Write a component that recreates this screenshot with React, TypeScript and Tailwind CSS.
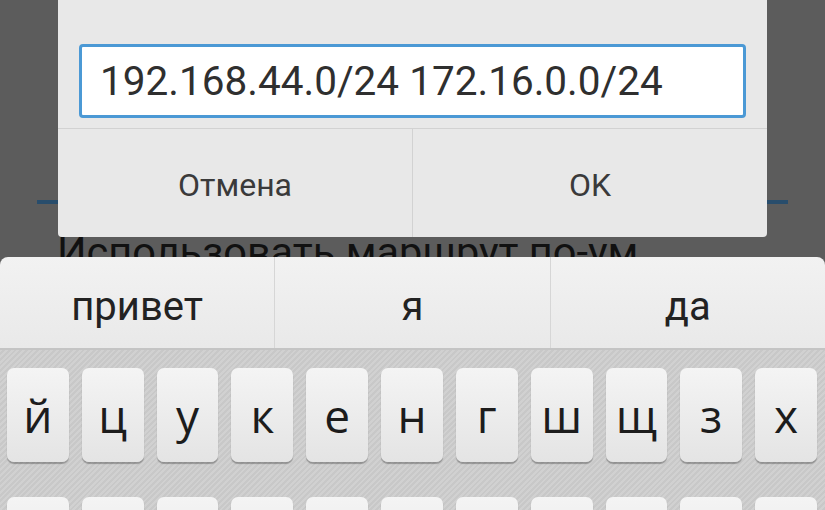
import React from "react";

const row1 = ["й", "ц", "у", "к", "е", "н", "г", "ш", "щ", "з", "х"];
const row2 = ["ф", "ы", "в", "а", "п", "р", "о", "л", "д", "ж", "э"];

function Key({ ch }: { ch: string }) {
  return (
    <div className="flex-1 h-[94px] shrink-0 rounded-[7px] bg-gradient-to-b from-[#f4f4f4] to-[#e4e4e4] shadow-[0_2px_1px_rgba(0,0,0,0.28)] flex items-center justify-center">
      <span className="text-[46px] leading-none text-[#1c1c1c]" style={{ fontFamily: '"Open Sans", sans-serif' }}>
        {ch}
      </span>
    </div>
  );
}

export default function App() {
  return (
    <div className="relative w-[825px] h-[510px] overflow-hidden bg-[#5c5c5c]" style={{ fontFamily: "Roboto, sans-serif" }}>
      {/* background page */}
      <div className="pt-[200px] px-[37px]">
        <div className="h-[4px] bg-[#284d6c]" />
        <div className="pl-[20px] mt-[27px] text-[41.5px] leading-none text-[#111] whitespace-nowrap">
          Использовать маршрут по-ум
        </div>
      </div>

      {/* dialog */}
      <div className="absolute left-[58px] top-0 w-[709px] h-[237px] bg-[#e8e8e8] rounded-b-[4px] flex flex-col">
        <div className="px-[21px] pt-[44px] pb-[10px]">
          <div className="h-[74px] bg-white border-[3px] border-[#4b99d5] rounded-[4px] flex items-center pl-[18px]">
            <span className="text-[40.5px] leading-none text-[#2f2f2f]">192.168.44.0/24 172.16.0.0/24</span>
          </div>
        </div>
        <div className="h-px bg-[#d2d2d2]" />
        <div className="flex-1 flex">
          <div className="flex-1 flex items-center justify-center text-[32px] text-[#3a3a3a] pt-[3px]">Отмена</div>
          <div className="w-px bg-[#d2d2d2]" />
          <div className="flex-1 flex items-center justify-center text-[32px] text-[#3a3a3a] pt-[3px]">OK</div>
        </div>
      </div>

      {/* keyboard */}
      <div className="absolute left-0 right-0 top-[257px] bottom-0 flex flex-col">
        <div className="h-[93px] shrink-0 rounded-t-[8px] bg-gradient-to-b from-[#f2f2f2] to-[#e9e9e9] border-b-2 border-[#c4c4c4] flex">
          <div className="flex-1 flex items-center justify-center text-[40px] leading-none text-[#222] pt-[8px]">привет</div>
          <div className="w-px bg-[#d6d6d6]" />
          <div className="flex-1 flex items-center justify-center text-[40px] leading-none text-[#222] pt-[8px]">я</div>
          <div className="w-px bg-[#d6d6d6]" />
          <div className="flex-1 flex items-center justify-center text-[40px] leading-none text-[#222] pt-[8px]">да</div>
        </div>
        <div
          className="flex-1 bg-[#cecece] pt-[18px] pl-[7px] pr-[8px] flex flex-col gap-[35px]"
          style={{ backgroundImage: "repeating-linear-gradient(135deg, rgba(255,255,255,0.06) 0px, rgba(255,255,255,0.06) 2px, rgba(0,0,0,0.03) 2px, rgba(0,0,0,0.03) 4px)" }}
        >
          <div className="flex gap-[13px] shrink-0">
            {row1.map((c) => (
              <Key key={c} ch={c} />
            ))}
          </div>
          <div className="flex gap-[13px] shrink-0">
            {row2.map((c) => (
              <Key key={c} ch={c} />
            ))}
          </div>
        </div>
      </div>
    </div>
  );
}
